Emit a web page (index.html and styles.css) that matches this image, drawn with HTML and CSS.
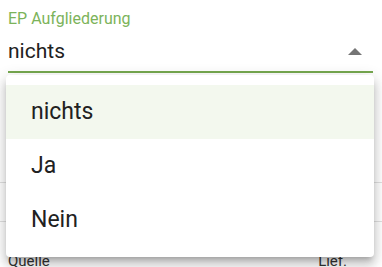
FILE: index.html
```html
<!DOCTYPE html>
<html lang="de">
<head>
<meta charset="utf-8">
<link rel="stylesheet" href="styles.css">
</head>
<body>
<div class="page">
  <div class="field">
    <div class="label">EP Aufgliederung</div>
    <div class="control">
      <span class="value">nichts</span>
      <span class="arrow"></span>
    </div>
  </div>
  <div class="rows">
    <div class="row"></div>
    <div class="row"></div>
  </div>
  <div class="footer">
    <span>Quelle</span>
    <span class="right">Lief.</span>
  </div>
  <ul class="menu">
    <li class="item selected">nichts</li>
    <li class="item">Ja</li>
    <li class="item">Nein</li>
  </ul>
</div>
</body>
</html>
```
FILE: styles.css
```css
html, body {
  margin: 0;
  padding: 0;
  background: #ffffff;
}
.page {
  position: relative;
  width: 382px;
  height: 267px;
  overflow: hidden;
  font-family: Roboto, "Liberation Sans", sans-serif;
  color: #212121;
}
.field {
  padding: 10px 9px 0 8px;
}
.label {
  font-size: 16px;
  line-height: 18px;
  height: 18px;
  color: #7cb35a;
}
.control {
  display: flex;
  align-items: center;
  padding: 11px 0 8px 0;
  border-bottom: 2px solid #76a84f;
}
.value {
  flex: 1;
  font-size: 21px;
  line-height: 24px;
}
.arrow {
  width: 0;
  height: 0;
  border-left: 7px solid transparent;
  border-right: 7px solid transparent;
  border-bottom: 7px solid #757575;
  margin-right: 11px;
}
.rows {
  margin-top: 71px;
}
.row {
  height: 38px;
  border-bottom: 1px solid #e0e0e0;
}
.footer {
  display: flex;
  justify-content: space-between;
  padding: 30px 35px 0 8px;
  font-size: 15px;
  line-height: 18px;
  color: #333333;
}
.menu {
  position: absolute;
  top: 75px;
  left: 6px;
  width: 368px;
  margin: 0;
  padding: 10px 0;
  list-style: none;
  background: #ffffff;
  border-radius: 4px;
  box-shadow: 0 5px 5px -3px rgba(0,0,0,0.2), 0 8px 10px 1px rgba(0,0,0,0.14), 0 3px 14px 2px rgba(0,0,0,0.12);
}
.item {
  height: 54px;
  line-height: 54px;
  padding-left: 25px;
  font-size: 23px;
  color: #212121;
}
.item.selected {
  background: #f3f8ee;
}
```
